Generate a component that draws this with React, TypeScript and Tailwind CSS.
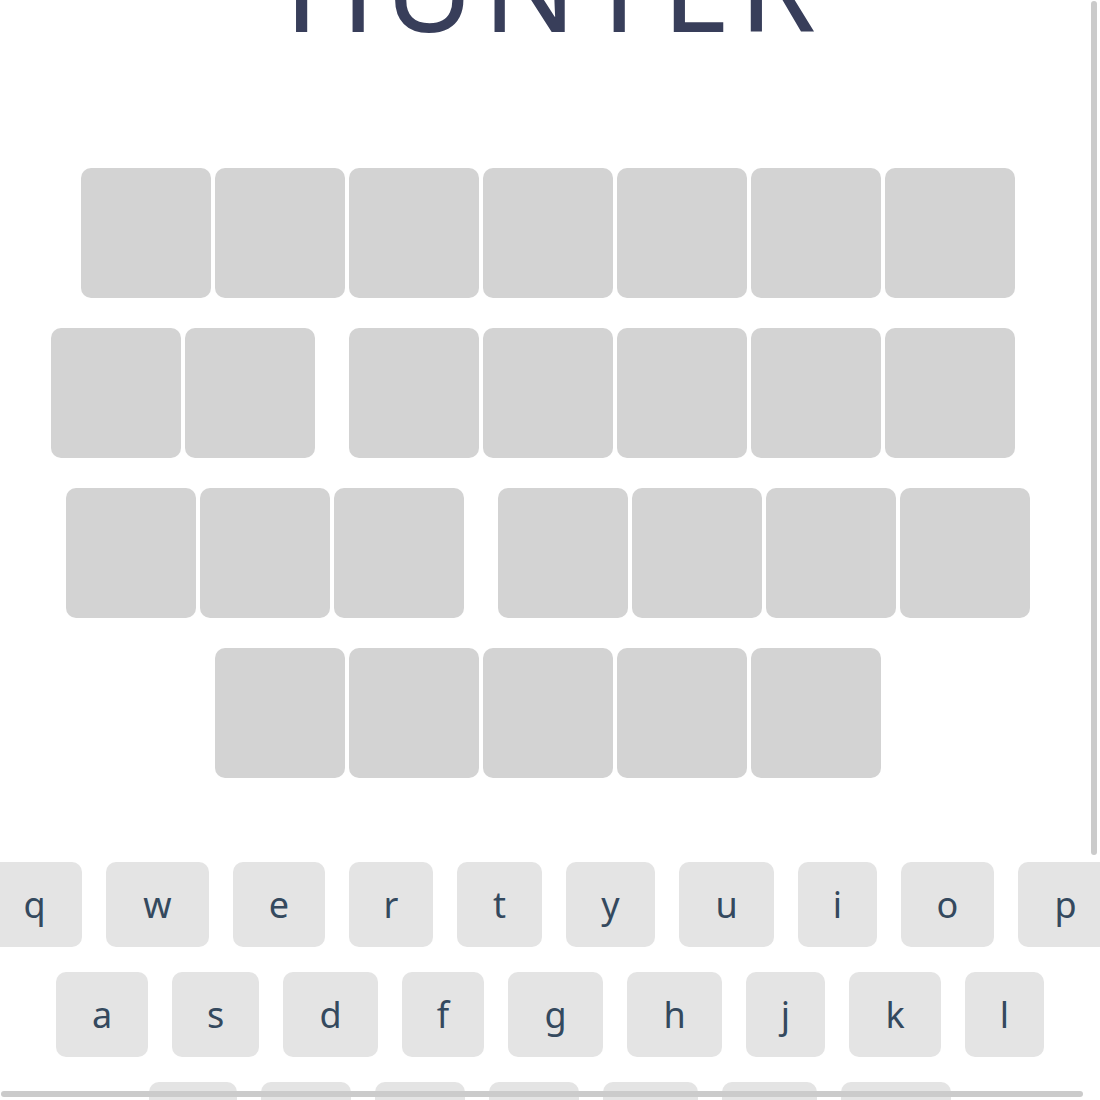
const boardRows = ["xxxxxxx", "xx xxxxx ", "xxx xxxx", "xxxxx"];

const keyRows: [string, string][][] = [
  [
    ["q", "w-[95px]"],
    ["w", "w-[103px]"],
    ["e", "w-[92px]"],
    ["r", "w-[84px]"],
    ["t", "w-[85px]"],
    ["y", "w-[89px]"],
    ["u", "w-[95px]"],
    ["i", "w-[79px]"],
    ["o", "w-[93px]"],
    ["p", "w-[95px]"],
  ],
  [
    ["a", "w-[92px]"],
    ["s", "w-[87px]"],
    ["d", "w-[95px]"],
    ["f", "w-[82px]"],
    ["g", "w-[95px]"],
    ["h", "w-[95px]"],
    ["j", "w-[79px]"],
    ["k", "w-[92px]"],
    ["l", "w-[79px]"],
  ],
  [
    ["z", "w-[88px]"],
    ["x", "w-[90px]"],
    ["c", "w-[90px]"],
    ["v", "w-[90px]"],
    ["b", "w-[95px]"],
    ["n", "w-[95px]"],
    ["m", "w-[110px]"],
  ],
];

function Board() {
  return (
    <div className="mt-[122px] flex flex-col items-center gap-[30px]">
      {boardRows.map((row, r) => (
        <div key={r} className="flex">
          {row.split("").map((ch, i) =>
            ch === " " ? (
              <div key={i} className="w-[30px]" />
            ) : (
              <div key={i} className="mr-[4px] h-[130px] w-[130px] rounded-[10px] bg-[#d3d3d3]" />
            )
          )}
        </div>
      ))}
    </div>
  );
}

function Keyboard() {
  return (
    <div className="mt-[84px] flex w-full flex-col items-center gap-[25px]">
      {keyRows.map((row, r) => (
        <div key={r} className="flex w-full justify-center gap-[24px]">
          {row.map(([letter, width]) => (
            <button
              key={letter}
              className={`flex h-[85px] shrink-0 items-center justify-center rounded-[10px] bg-[#e4e4e4] text-[36px] text-[#34495e] ${width}`}
            >
              {letter}
            </button>
          ))}
        </div>
      ))}
    </div>
  );
}

function ScrollThumbs() {
  return (
    <>
      <div className="fixed top-[1px] left-[1091px] h-[854px] w-[6px] rounded-full bg-[#cbcbcb]" />
      <div className="fixed top-[1091px] left-[1px] h-[6px] w-[1082px] rounded-full bg-[#cbcbcb]" />
    </>
  );
}

export default function App() {
  return (
    <div className="flex w-full flex-col items-center bg-white pb-[243px] font-['Noto_Sans',sans-serif]">
      <h1 className="-mt-[78px] pl-[8px] text-[124px] leading-none tracking-[8px] text-[#383e5a]">
        HUNTER
      </h1>
      <Board />
      <Keyboard />
      <ScrollThumbs />
    </div>
  );
}
